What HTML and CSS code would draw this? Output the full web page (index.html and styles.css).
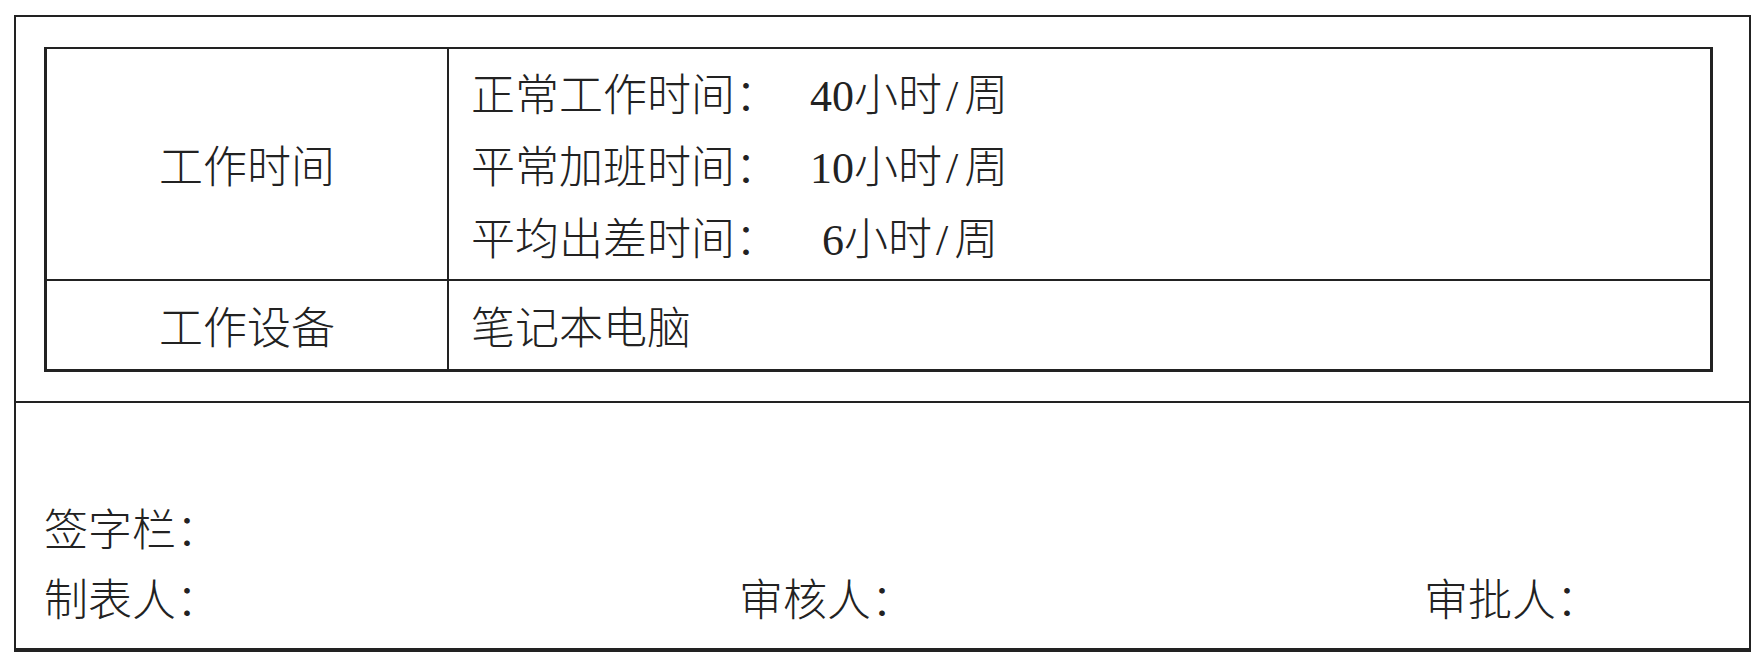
FILE: index.html
```html
<!DOCTYPE html>
<html lang="zh-CN">
<head>
<meta charset="utf-8">
<title>工作时间与设备</title>
<link rel="stylesheet" href="styles.css">
</head>
<body>
<div class="sheet">
  <div class="top">
    <div class="grid">
      <div class="cell head row1">工作时间</div>
      <div class="cell body row1">
        <div class="line"><span class="label">正常工作时间：</span><span class="value">40小时<span class="slash">/</span>周</span></div>
        <div class="line"><span class="label">平常加班时间：</span><span class="value">10小时<span class="slash">/</span>周</span></div>
        <div class="line"><span class="label">平均出差时间：</span><span class="value single">6小时<span class="slash">/</span>周</span></div>
      </div>
      <div class="cell head">工作设备</div>
      <div class="cell body">笔记本电脑</div>
    </div>
  </div>
  <div class="bottom">
    <div class="sign-line">签字栏：</div>
    <div class="sign-row">
      <span>制表人：</span>
      <span>审核人：</span>
      <span>审批人：</span>
    </div>
  </div>
</div>
</body>
</html>
```

FILE: styles.css
```css
* {
  box-sizing: border-box;
}

html, body {
  margin: 0;
  padding: 0;
  background: #ffffff;
}

body {
  font-family: "Noto Sans CJK SC", "Noto Sans", sans-serif;
  font-weight: 300;
  color: #222222;
  font-size: 44px;
}

.sheet {
  margin: 15px 0 0 14px;
  width: 1737px;
  height: 637px;
  border: 2px solid #222222;
  border-bottom-width: 4px;
  display: flex;
  flex-direction: column;
}

.top {
  padding: 30px 36px 29px 28px;
  border-bottom: 2px solid #222222;
}

.grid {
  display: grid;
  grid-template-columns: 402px 1fr;
  grid-template-rows: 232px 88px;
  border: 2px solid #222222;
  border-left-width: 3px;
  border-right-width: 3px;
  border-bottom-width: 3px;
}

.cell {
  display: flex;
  align-items: center;
}

.cell.head {
  justify-content: center;
  border-right: 2px solid #222222;
}

.cell.row1 {
  border-bottom: 2px solid #222222;
}

.cell.body {
  padding-left: 22px;
}

.cell.body.row1 {
  flex-direction: column;
  align-items: flex-start;
  justify-content: center;
}

.line {
  height: 72px;
  line-height: 72px;
  white-space: nowrap;
}

.label {
  display: inline-block;
  width: 339px;
}

.value {
  font-family: "Liberation Serif", "Noto Sans CJK SC", serif;
}

.value.single {
  padding-left: 12px;
}

.slash {
  margin: 0 6px 0 4px;
}

.bottom {
  flex: 1;
  display: flex;
  flex-direction: column;
  justify-content: flex-end;
  padding: 0 0 16px 28px;
}

.sign-line,
.sign-row {
  height: 70px;
  line-height: 70px;
  white-space: nowrap;
}

.sign-row {
  display: grid;
  grid-template-columns: 695px 685px 1fr;
}
```
